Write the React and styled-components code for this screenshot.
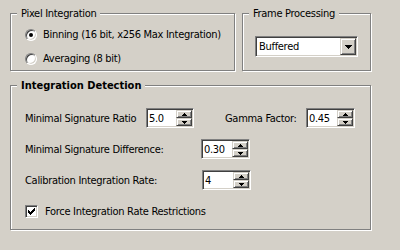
import React from 'react';
import styled, { createGlobalStyle } from 'styled-components';

const Global = createGlobalStyle`
  html, body { margin: 0; padding: 0; background: #D4D0C8; }
  body {
    width: 400px; height: 250px; overflow: hidden;
    font-family: "DejaVu Sans Condensed", "DejaVu Sans", sans-serif;
    font-stretch: condensed;
    font-size: 11px; color: #000;
    letter-spacing: -0.3px;
  }
`;

const Page = styled.div`
  padding: 13px 0 0 10px;
  display: flex;
  flex-direction: column;
  gap: 14px;
`;

const TopRow = styled.div`
  display: flex;
  gap: 7px;
`;

const Group = styled.div`
  position: relative;
  box-sizing: border-box;
  width: ${p => p.$w}px;
  height: ${p => p.$h}px;
  border: 1px solid #808080;
  box-shadow: inset 1px 1px 0 #fff, 1px 1px 0 #fff;
  padding: ${p => p.$pad};
  display: flex;
  flex-direction: column;
`;

const Legend = styled.span`
  position: absolute;
  top: -7px;
  left: 6px;
  padding: 0 4px;
  background: #D4D0C8;
  line-height: 13px;
  white-space: nowrap;
  font-weight: ${p => (p.$bold ? 'bold' : 'normal')};
  letter-spacing: ${p => (p.$bold ? '0' : '-0.3px')};
`;

const OptionList = styled.div`
  display: flex;
  flex-direction: column;
  gap: 11px;
`;

const OptionRow = styled.label`
  display: flex;
  align-items: center;
  height: 13px;
  gap: ${p => p.$gap}px;
  margin-top: ${p => p.$mt || 0}px;
  white-space: nowrap;
`;

const Radio = styled.span`
  position: relative;
  box-sizing: border-box;
  width: 12px;
  height: 12px;
  border-radius: 50%;
  background: #fff;
  border: 1px solid;
  border-color: #808080 #fff #fff #808080;
  box-shadow: inset 1px 1px 0 #404040, inset -1px -1px 0 #D4D0C8;
  flex: none;
  &::after {
    content: '';
    display: ${p => (p.$checked ? 'block' : 'none')};
    position: absolute;
    left: 3px;
    top: 3px;
    width: 4px;
    height: 4px;
    border-radius: 50%;
    background: #000;
  }
`;

const CheckBox = styled.span`
  box-sizing: border-box;
  width: 13px;
  height: 13px;
  background: #fff;
  border: 1px solid;
  border-color: #808080 #fff #fff #808080;
  box-shadow: inset 1px 1px 0 #404040, inset -1px -1px 0 #D4D0C8;
  padding: 1px;
  flex: none;
  display: flex;
`;

const Sunken = styled.div`
  box-sizing: border-box;
  width: ${p => p.$w}px;
  height: ${p => p.$h}px;
  display: flex;
  background: #fff;
  border: 1px solid;
  border-color: #808080 #fff #fff #808080;
  box-shadow: inset 1px 1px 0 #404040, inset -1px -1px 0 #D4D0C8;
  padding: 1px;
  flex: none;
`;

const FieldText = styled.span`
  flex: 1;
  display: flex;
  align-items: center;
  padding-left: ${p => p.$pl}px;
  white-space: nowrap;
`;

const SpinButtons = styled.div`
  display: flex;
  flex-direction: column;
  width: 16px;
`;

const RaisedButton = styled.div`
  box-sizing: border-box;
  flex: 1;
  width: 100%;
  background: #D4D0C8;
  border: 1px solid;
  border-color: #D4D0C8 #404040 #404040 #D4D0C8;
  box-shadow: inset 1px 1px 0 #fff, inset -1px -1px 0 #808080;
  display: flex;
  align-items: center;
  justify-content: center;
`;

const DropButton = styled(RaisedButton)`
  flex: none;
  width: 16px;
  height: 100%;
`;

const Arrow = ({ up, w = 5 }) => {
  const h = Math.ceil(w / 2);
  const rects = [];
  for (let i = 0; i < h; i++) {
    const row = up ? h - 1 - i : i;
    rects.push(<rect key={i} x={row} y={i} width={w - 2 * row} height={1} />);
  }
  return (
    <svg width={w} height={h} shapeRendering="crispEdges" fill="#000">
      {rects}
    </svg>
  );
};

const CheckMark = () => {
  const pattern = [
    '......X',
    '.....XX',
    'X...XXX',
    'XX.XXX.',
    'XXXXX..',
    '.XXX...',
    '..X....',
  ];
  const rects = [];
  pattern.forEach((row, y) =>
    row.split('').forEach((c, x) => {
      if (c === 'X') rects.push(<rect key={`${x}-${y}`} x={x + 1} y={y + 1} width={1} height={1} />);
    })
  );
  return (
    <svg width="9" height="9" shapeRendering="crispEdges" fill="#000">
      {rects}
    </svg>
  );
};

const SpinBox = ({ value, w }) => (
  <Sunken $w={w} $h={20}>
    <FieldText $pl={1}>{value}</FieldText>
    <SpinButtons>
      <RaisedButton><Arrow up w={5} /></RaisedButton>
      <RaisedButton><Arrow w={5} /></RaisedButton>
    </SpinButtons>
  </Sunken>
);

const FieldRows = styled.div`
  display: flex;
  flex-direction: column;
  gap: 11px;
`;

const FieldRow = styled.div`
  display: flex;
  align-items: center;
  height: 20px;
`;

const Label = styled.span`
  width: ${p => p.$w}px;
  margin-left: ${p => p.$ml || 0}px;
  white-space: nowrap;
  flex: none;
`;

export default function App() {
  return (
    <>
      <Global />
      <Page>
        <TopRow>
          <Group $w={225} $h={58} $pad="14px 0 0 14px">
            <Legend>Pixel Integration</Legend>
            <OptionList>
              <OptionRow $gap={6}>
                <Radio $checked />
                Binning (16 bit, x256 Max Integration)
              </OptionRow>
              <OptionRow $gap={6}>
                <Radio />
                Averaging (8 bit)
              </OptionRow>
            </OptionList>
          </Group>
          <Group $w={129} $h={58} $pad="22px 0 0 12px">
            <Legend>Frame Processing</Legend>
            <Sunken $w={103} $h={21}>
              <FieldText $pl={2}>Buffered</FieldText>
              <DropButton><Arrow w={7} /></DropButton>
            </Sunken>
          </Group>
        </TopRow>
        <Group $w={361} $h={145} $pad="22px 0 0 14px">
          <Legend $bold>Integration Detection</Legend>
          <FieldRows>
            <FieldRow>
              <Label $w={121}>Minimal Signature Ratio</Label>
              <SpinBox value="5.0" w={48} />
              <Label $w={81} $ml={31}>Gamma Factor:</Label>
              <SpinBox value="0.45" w={49} />
            </FieldRow>
            <FieldRow>
              <Label $w={176}>Minimal Signature Difference:</Label>
              <SpinBox value="0.30" w={49} />
            </FieldRow>
            <FieldRow>
              <Label $w={177}>Calibration Integration Rate:</Label>
              <SpinBox value="4" w={49} />
            </FieldRow>
          </FieldRows>
          <OptionRow $gap={7} $mt={15}>
            <CheckBox><CheckMark /></CheckBox>
            Force Integration Rate Restrictions
          </OptionRow>
        </Group>
      </Page>
    </>
  );
}
